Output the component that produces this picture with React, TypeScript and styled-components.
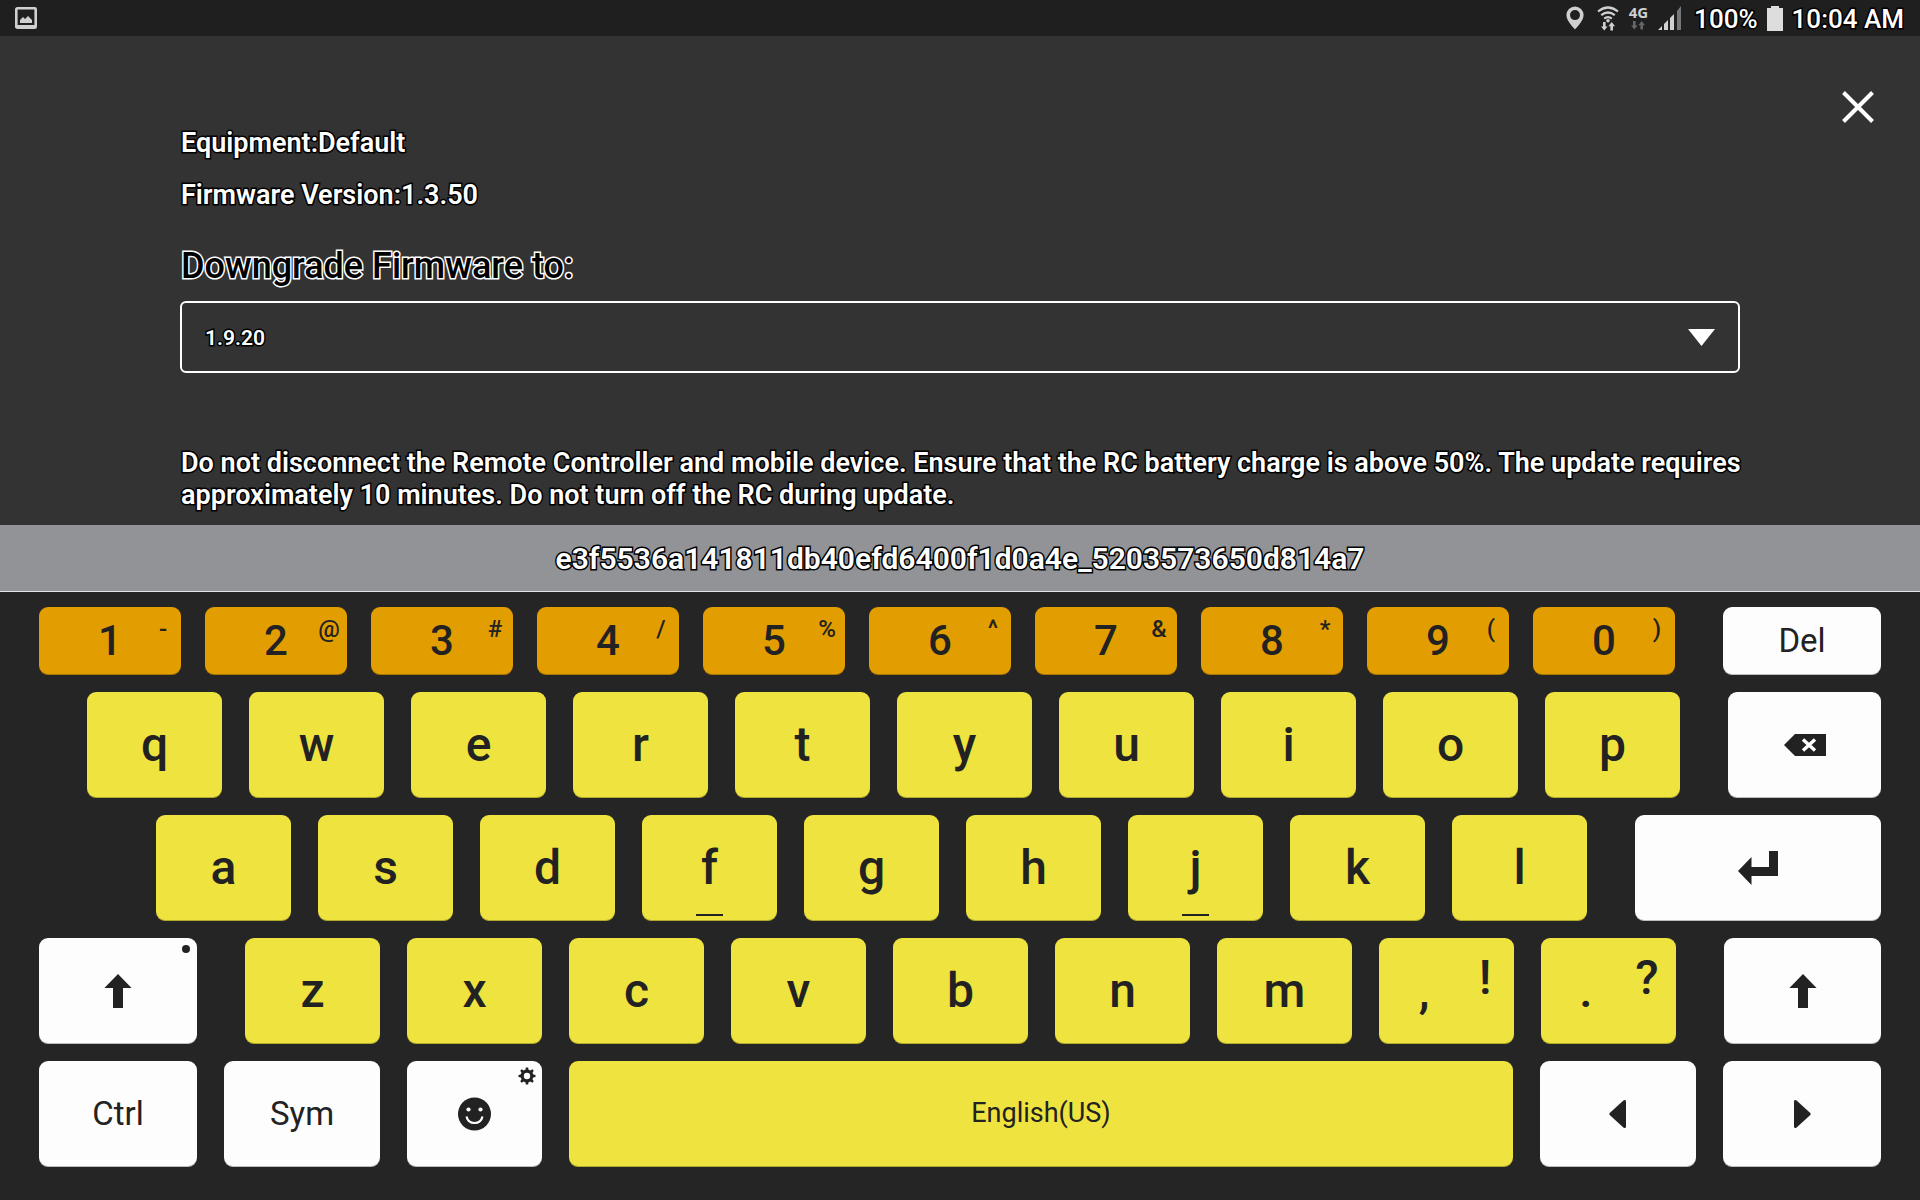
import React from "react";
import styled, { createGlobalStyle, css } from "styled-components";

const ink = "#222222";
const palette = { number: "#e29e00", letter: "#eee33f", control: "#fdfdfd" };
type Tone = keyof typeof palette;

const GlobalStyle = createGlobalStyle`
  *, *::before, *::after { box-sizing: border-box; }
  body {
    margin: 0;
    background: #333333;
    color: #ffffff;
    font-family: Roboto, "Liberation Sans", sans-serif;
  }
  p { margin: 0; }
  button, select { font: inherit; color: inherit; }
`;

const outlined = css<{ $edge?: string }>`
  paint-order: stroke fill;
  -webkit-text-stroke: 3px ${(p) => p.$edge ?? "#000000"};
`;

const Screen = styled.div`
  min-height: 100vh;
  display: flex;
  flex-direction: column;
`;

const StatusBar = styled.header`
  height: 36px;
  flex: none;
  display: flex;
  align-items: center;
  justify-content: space-between;
  padding: 0 16px 0 15px;
  background: #1f1f1f;
  color: #d0d0d0;
  svg { display: block; }
`;

const StatusGroup = styled.div`
  display: flex;
  align-items: center;
  gap: 9px;
`;

const IconCluster = styled.div`
  display: flex;
  align-items: center;
  gap: 10px;
  margin-right: 3px;
  > :first-child { margin-right: 3px; }
`;

const StatusText = styled.span`
  padding-top: 2px;
  font-size: 26px;
  line-height: 34px;
  font-weight: 500;
  color: #ffffff;
  ${outlined}
`;

const Network = styled.span`
  display: flex;
  flex-direction: column;
  align-items: center;
  gap: 3px;
  font: bold 15px/12px "Noto Sans", sans-serif;
`;

const Panel = styled.main`
  position: relative;
  flex: 1;
  padding: 88px 180px 12px;
`;

const CloseButton = styled.button`
  position: absolute;
  top: 47px;
  right: 38px;
  width: 48px;
  height: 48px;
  padding: 0;
  display: grid;
  place-items: center;
  border: 0;
  background: none;
`;

const Detail = styled.p`
  font-size: 27px;
  line-height: 32px;
  padding-left: 1px;
  margin-top: 20px;
  font-weight: 600;
  ${outlined}
  &:first-of-type { margin-top: 0; padding-top: 3px; }
`;

const FieldLabel = styled.label`
  display: block;
  margin: 34px 0 14px;
  padding-left: 1px;
  font-size: 36px;
  line-height: 42px;
  font-weight: 500;
  color: #000000;
  ${outlined}
`;

const SelectBox = styled.div`
  position: relative;
`;

const VersionSelect = styled.select`
  display: block;
  width: 100%;
  height: 72px;
  padding: 2px 64px 0 23px;
  appearance: none;
  border: 2px solid #ffffff;
  border-radius: 6px;
  background: transparent;
  font-size: 21px;
  font-weight: 600;
  ${outlined}
  option { color: #000000; -webkit-text-stroke: 0; }
`;

const SelectArrow = styled.svg`
  position: absolute;
  right: 25px;
  top: 28px;
  pointer-events: none;
`;

const Notice = styled.p`
  margin-top: 74px;
  margin-right: -8px;
  padding-left: 1px;
  font-size: 27px;
  line-height: 32px;
  font-weight: 600;
  ${outlined}
`;

const Suggestion = styled.button`
  display: block;
  width: 100%;
  height: 67px;
  flex: none;
  padding: 0;
  border: 0;
  border-bottom: 1px solid #e4e4e6;
  background: #929397;
  font-size: 30px;
  font-weight: 600;
  ${outlined}
`;

const Keyboard = styled.section`
  flex: none;
  display: grid;
  gap: 17px;
  padding: 15px 0 33px;
  background: #252525;
`;

const KeyRow = styled.div<{ $indent?: number; $gap?: number; $height?: number }>`
  display: flex;
  gap: ${(p) => p.$gap ?? 27}px;
  height: ${(p) => p.$height ?? 106}px;
  padding: 0 39px 0 ${(p) => p.$indent ?? 39}px;
`;

const Key = styled.button<{ $tone: Tone; $grow: number; $size?: number; $before?: number }>`
  position: relative;
  flex: ${(p) => p.$grow} 1 0;
  min-width: 0;
  margin-left: ${(p) => p.$before ?? 0}px;
  padding: 0;
  display: flex;
  align-items: center;
  justify-content: center;
  border: 0;
  border-radius: 9px;
  background: ${(p) => palette[p.$tone]};
  box-shadow: inset 0 -1px 0 rgba(0, 0, 0, 0.25);
  color: ${ink};
  font-size: ${(p) => p.$size ?? 33}px;
  font-weight: ${(p) => ((p.$size ?? 33) > 33 ? 500 : 400)};
  svg { display: block; }
`;

const Cap = styled.span<{ $shared?: boolean }>`
  padding: 0 ${(p) => (p.$shared ? 45 : 0)}px 2px 0;
`;

const Hint = styled.span<{ $large?: boolean }>`
  position: absolute;
  right: 0;
  top: ${(p) => (p.$large ? 12 : 8)}px;
  width: ${(p) => (p.$large ? 58 : 36)}px;
  font-size: ${(p) => (p.$large ? 48 : 24)}px;
  line-height: ${(p) => (p.$large ? 56 : 28)}px;
  text-align: center;
`;

const HomeMark = styled.span`
  position: absolute;
  bottom: 5px;
  left: 50%;
  width: 27px;
  height: 2px;
  margin-left: -14px;
  background: ${ink};
`;

const LockDot = styled.span`
  position: absolute;
  top: 7px;
  right: 7px;
  width: 8px;
  height: 8px;
  border-radius: 50%;
  background: ${ink};
`;

const Corner = styled.span`
  position: absolute;
  top: 6px;
  right: 6px;
`;

const TransferArrows = ({ fill }: { fill: string }) => (
  <svg width="14" height="9" viewBox="0 0 14 9" fill={fill} aria-hidden="true">
    <path d="M2 0h2.6v4.4H6.6L3.3 8.6 0 4.4h2zM9.4 8.6H12V4.2h2L10.7 0 7.4 4.2h2z" />
  </svg>
);

const UpArrow = () => (
  <svg width="28" height="34" viewBox="0 0 28 34" fill={ink} aria-hidden="true">
    <path d="M14 0 27.6 14H19v20H9V14H.4z" />
  </svg>
);

const SideArrow = ({ flip }: { flip?: boolean }) => (
  <svg width="18" height="28" viewBox="0 0 18 28" fill={ink} aria-hidden="true">
    <path
      transform={flip ? "matrix(-1 0 0 1 18 0)" : undefined}
      d="M.7 13 14.4.6C15.6-.4 17 .1 17 1.6v24.8c0 1.5-1.4 2-2.6 1L.7 15Q0 14 .7 13z"
    />
  </svg>
);

const numbers = [
  ["1", "-"], ["2", "@"], ["3", "#"], ["4", "/"], ["5", "%"],
  ["6", "^"], ["7", "&"], ["8", "*"], ["9", "("], ["0", ")"],
];

const Letter = ({ char, before }: { char: string; before?: number }) => (
  <Key $tone="letter" $grow={135} $size={48} $before={before}>
    <Cap>{char}</Cap>
    {(char === "f" || char === "j") && <HomeMark />}
  </Key>
);

const gearTeeth = [0, 45, 90, 135, 180, 225, 270, 315];

export default function App() {
  return (
    <Screen>
      <GlobalStyle />
      <StatusBar>
        <svg width="22" height="22" viewBox="0 0 22 22" aria-label="Screenshot saved">
          <rect x="1.3" y="1.3" width="19.4" height="19.4" rx="1" fill="none" stroke="currentColor" strokeWidth="2.6" />
          <path d="M1 18h20v3H1zM5 16v-3l3-3 2 2 3-3 4 4v3z" fill="currentColor" />
        </svg>
        <StatusGroup>
          <IconCluster>
            <svg width="18" height="24" viewBox="0 0 18 24" aria-label="Location">
              <path fillRule="evenodd" fill="currentColor" d="M9 .5a8.6 8.6 0 0 0-8.6 8.6C.4 15.4 9 23.5 9 23.5s8.6-8.1 8.6-14.4A8.6 8.6 0 0 0 9 .5zm0 3.6a5 5 0 1 1 0 10 5 5 0 0 1 0-10z" />
            </svg>
            <svg width="22" height="25" viewBox="0 0 22 25" aria-label="Wi-Fi">
              <g fill="none" stroke="currentColor" strokeWidth="2.2">
                <path d="M1 5.5Q11-2.5 21 5.5M4.2 9.2Q11 3.8 17.8 9.2M7.2 12.7q3.8-3 7.6 0" />
              </g>
              <circle cx="11" cy="14.8" r="1.8" fill="currentColor" />
              <path fill="currentColor" d="M6 16h2.6v4.4h2L7.3 24.6 4 20.4h2zM13.4 24.6H16v-4.400h2L14.7 16l-3.3 4.200h2z" />
            </svg>
            <Network>
              4G
              <TransferArrows fill="#666666" />
            </Network>
            <svg width="24" height="24" viewBox="0 0 24 24" aria-label="Signal">
              <path fill="currentColor" d="M0 24l4-4v4zM6 24v-6l4-4v10zM12 24V12l4-4v16z" />
              <path fill="#777777" d="M19 24V5l4-5v24z" />
            </svg>
          </IconCluster>
          <StatusText>100%</StatusText>
          <svg width="16" height="25" viewBox="0 0 16 25" aria-label="Battery">
            <path fill="#dddddd" d="M4 0h8v2h4v23H0V2h4z" />
          </svg>
          <StatusText>10:04 AM</StatusText>
        </StatusGroup>
      </StatusBar>

      <Panel>
        <CloseButton aria-label="Close">
          <svg width="32" height="32" viewBox="0 0 32 32" aria-hidden="true">
            <path d="M1.5 1.5l29 29M30.5 1.5l-29 29" stroke="#ffffff" strokeWidth="4" />
          </svg>
        </CloseButton>
        <Detail>Equipment:Default</Detail>
        <Detail>Firmware Version:1.3.50</Detail>
        <FieldLabel htmlFor="version" $edge="#ffffff">Downgrade Firmware to:</FieldLabel>
        <SelectBox>
          <VersionSelect id="version" defaultValue="1.9.20">
            <option>1.9.20</option>
          </VersionSelect>
          <SelectArrow width="27" height="17" viewBox="0 0 27 17" aria-hidden="true">
            <path d="M0 0h27L13.5 17z" fill="#ffffff" />
          </SelectArrow>
        </SelectBox>
        <Notice>
          Do not disconnect the Remote Controller and mobile device. Ensure that the RC battery charge is above 50%. The update requires approximately 10 minutes. Do not turn off the RC during update.
        </Notice>
      </Panel>

      <Suggestion>e3f5536a141811db40efd6400f1d0a4e_5203573650d814a7</Suggestion>

      <Keyboard aria-label="Keyboard">
        <KeyRow $gap={24} $height={68}>
          {numbers.map(([digit, hint]) => (
            <Key key={digit} $tone="number" $grow={142} $size={42}>
              <Cap>{digit}</Cap>
              <Hint>{hint}</Hint>
            </Key>
          ))}
          <Key $tone="control" $grow={158} $before={24}><Cap>Del</Cap></Key>
        </KeyRow>

        <KeyRow $indent={87}>
          {[..."qwertyuiop"].map((c) => <Letter key={c} char={c} />)}
          <Key $tone="control" $grow={153} $before={21} aria-label="Backspace">
            <svg width="42" height="22" viewBox="0 0 42 22" aria-hidden="true">
              <path d="M0 11 11 0h31v22H11z" fill={ink} />
              <path d="M19 5.5l12 11M31 5.5l-12 11" stroke="#ffffff" strokeWidth="3.4" />
            </svg>
          </Key>
        </KeyRow>

        <KeyRow $indent={156}>
          {[..."asdfghjkl"].map((c) => <Letter key={c} char={c} />)}
          <Key $tone="control" $grow={246} $before={21} aria-label="Enter">
            <svg width="40" height="34" viewBox="0 0 40 34" fill={ink} aria-hidden="true">
              <path d="M31 0h9v25H13.5v9L0 20 13.5 6v10H31z" />
            </svg>
          </Key>
        </KeyRow>

        <KeyRow>
          <Key $tone="control" $grow={158} aria-label="Left shift">
            <UpArrow />
            <LockDot />
          </Key>
          {[..."zxcvbnm"].map((c, i) => <Letter key={c} char={c} before={i === 0 ? 21 : 0} />)}
          <Key $tone="letter" $grow={135} $size={48}><Cap $shared>,</Cap><Hint $large>!</Hint></Key>
          <Key $tone="letter" $grow={135} $size={48}><Cap $shared>.</Cap><Hint $large>?</Hint></Key>
          <Key $tone="control" $grow={157} $before={21} aria-label="Right shift">
            <UpArrow />
          </Key>
        </KeyRow>

        <KeyRow>
          <Key $tone="control" $grow={158}><Cap>Ctrl</Cap></Key>
          <Key $tone="control" $grow={156}><Cap>Sym</Cap></Key>
          <Key $tone="control" $grow={135} aria-label="Emoji">
            <svg width="34" height="34" viewBox="0 0 34 34" aria-hidden="true">
              <circle cx="16.5" cy="17" r="16.5" fill={ink} />
              <circle cx="10.5" cy="12.5" r="2.1" fill="#ffffff" />
              <circle cx="22.5" cy="12.5" r="2.1" fill="#ffffff" />
              <path d="M8.5 19.5q1.5 6.5 8 6.5t8-6.5" fill="none" stroke="#ffffff" strokeWidth="2.2" />
            </svg>
            <Corner>
              <svg width="18" height="18" viewBox="0 0 18 18" aria-hidden="true">
                <circle cx="9" cy="9" r="4.8" fill="none" stroke={ink} strokeWidth="3.2" />
                {gearTeeth.map((angle) => (
                  <path key={angle} d="M7.3 4 7.900.5h2.2L10.700 4z" fill={ink} transform={`rotate(${angle} 9 9)`} />
                ))}
              </svg>
            </Corner>
          </Key>
          <Key $tone="letter" $grow={944} $size={27}><Cap>English(US)</Cap></Key>
          <Key $tone="control" $grow={156} aria-label="Move left"><SideArrow /></Key>
          <Key $tone="control" $grow={158} aria-label="Move right"><SideArrow flip /></Key>
        </KeyRow>
      </Keyboard>
    </Screen>
  );
}
